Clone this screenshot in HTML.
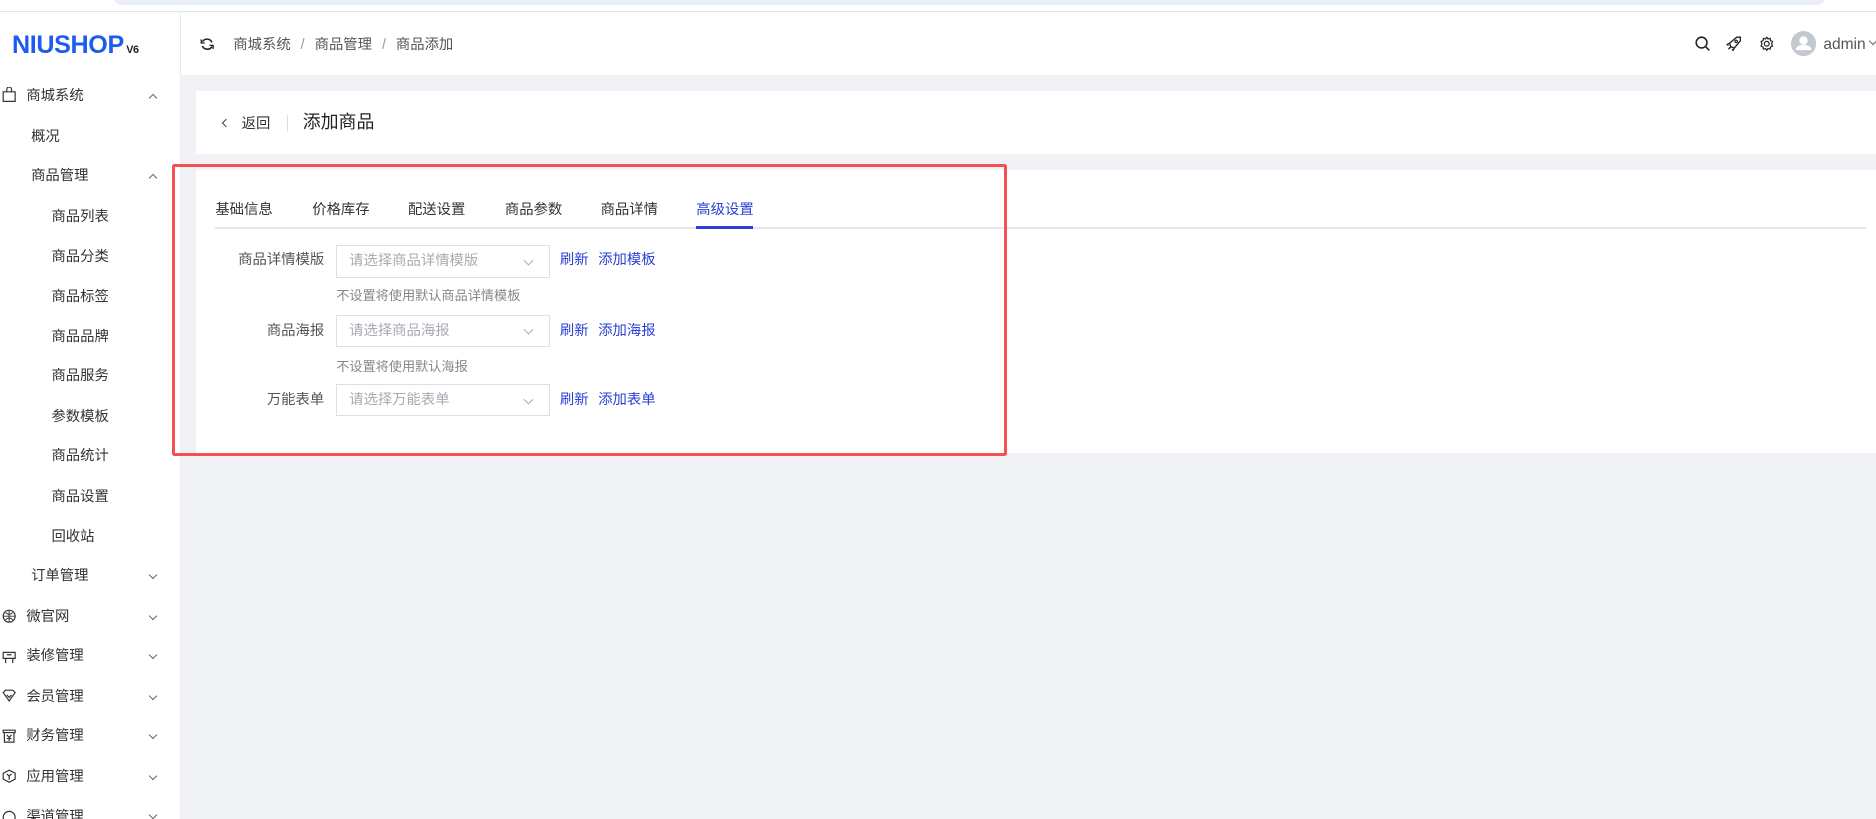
<!DOCTYPE html>
<html><head><meta charset="utf-8"><style>
*{margin:0;padding:0;box-sizing:border-box}
html,body{width:1876px;height:819px;overflow:hidden;background:#fff}
#w{zoom:1.1964;width:1568px;height:685px;position:relative;font-family:"Liberation Sans","Noto Sans CJK SC",sans-serif;font-size:12px;color:#333;overflow:hidden}
.a{position:absolute;white-space:nowrap;line-height:16px}
.side .a{font-size:12px;color:#333}
.chev{position:absolute;width:5px;height:5px;border-left:1px solid #666;border-top:1px solid #666}
.up{transform:rotate(45deg)}
.dn{transform:rotate(225deg)}
.sel{position:absolute;width:179px;height:27px;border:1px solid #dcdfe6;background:#fff;color:#a8abb2;padding-left:10px;line-height:26px}
.sel i{position:absolute;right:14px;top:9px;width:6px;height:6px;border-left:1px solid #aaa;border-bottom:1px solid #aaa;transform:rotate(-45deg)}
.lnk{color:#2b3fd6}
.lbl{position:absolute;width:120px;text-align:right;left:151px;color:#555;line-height:16px}
.hint{color:#888;font-size:11px}
</style></head><body><div id="w">
<div class="a" style="left:0;top:0;width:1568px;height:9px;background:#fff"></div>
<div class="a" style="left:95px;top:-8px;width:1430px;height:12px;background:#e8edf6;border-radius:8px"></div>
<div class="a" style="left:0;top:9px;width:1568px;height:1px;background:#e4e6ea"></div>
<div class="a side" style="left:0;top:10px;width:151px;height:675px;background:#fff;border-right:1px solid #eceef1">
<div class="a" style="left:10px;top:17px;font-size:21px;line-height:22px;font-weight:bold;color:#1e5cf0;letter-spacing:-0.3px">NIUSHOP<span style="font-size:9px;color:#222;margin-left:2px">V6</span></div>
</div>
<div class="side">
<svg class="a" style="left:2px;top:73px" width="12" height="13" viewBox="0 0 12 13"><path d="M1 4h10v8H1zM4 4V2a2 2 0 0 1 4 0v2" fill="none" stroke="#333"/></svg>
<div class="a" style="left:22px;top:73px">商城系统</div><div class="chev up" style="left:125px;top:79px"></div>
<div class="a" style="left:26px;top:107px">概况</div>
<div class="a" style="left:26px;top:140px">商品管理</div><div class="chev up" style="left:125px;top:146px"></div>
<div class="a" style="left:43px;top:174px">商品列表</div>
<div class="a" style="left:43px;top:207px">商品分类</div>
<div class="a" style="left:43px;top:241px">商品标签</div>
<div class="a" style="left:43px;top:274px">商品品牌</div>
<div class="a" style="left:43px;top:307px">商品服务</div>
<div class="a" style="left:43px;top:341px">参数模板</div>
<div class="a" style="left:43px;top:374px">商品统计</div>
<div class="a" style="left:43px;top:408px">商品设置</div>
<div class="a" style="left:43px;top:441px">回收站</div>
<div class="a" style="left:26px;top:474px">订单管理</div><div class="chev dn" style="left:125px;top:478px"></div>
<svg class="a" style="left:2px;top:509px" width="12" height="12" viewBox="0 0 12 12"><circle cx="6" cy="6" r="5" fill="none" stroke="#333"/><path d="M1 6h10M6 1v10M3 3c2 2 4 2 6 0M3 9c2-2 4-2 6 0" fill="none" stroke="#333" stroke-width=".8"/></svg>
<div class="a" style="left:22px;top:508px">微官网</div><div class="chev dn" style="left:125px;top:512px"></div>
<svg class="a" style="left:2px;top:543px" width="12" height="12" viewBox="0 0 12 12"><path d="M1 2h10v5H1zM3 7v4M9 7v4M4 4h4" fill="none" stroke="#333"/></svg>
<div class="a" style="left:22px;top:541px">装修管理</div><div class="chev dn" style="left:125px;top:545px"></div>
<svg class="a" style="left:2px;top:576px" width="12" height="12" viewBox="0 0 12 12"><path d="M1 3l2-2h6l2 2-5 7z M4 5l2 2 2-2" fill="none" stroke="#333"/></svg>
<div class="a" style="left:22px;top:575px">会员管理</div><div class="chev dn" style="left:125px;top:579px"></div>
<svg class="a" style="left:2px;top:609px" width="12" height="12" viewBox="0 0 12 12"><path d="M1 1h10v2H1zM2 3v8h8V3M4 5l2 2 2-2M6 7v3M4 8h4" fill="none" stroke="#333"/></svg>
<div class="a" style="left:22px;top:608px">财务管理</div><div class="chev dn" style="left:125px;top:612px"></div>
<svg class="a" style="left:2px;top:643px" width="12" height="12" viewBox="0 0 12 12"><path d="M6 1l5 2.5v5L6 11 1 8.5v-5zM4 4l2 2 2-2M6 6v3" fill="none" stroke="#333"/></svg>
<div class="a" style="left:22px;top:642px">应用管理</div><div class="chev dn" style="left:125px;top:646px"></div>
<svg class="a" style="left:2px;top:676px" width="12" height="12" viewBox="0 0 12 12"><circle cx="6" cy="7" r="5" fill="none" stroke="#333"/></svg>
<div class="a" style="left:22px;top:675px">渠道管理</div><div class="chev dn" style="left:125px;top:679px"></div>
</div>
<div class="a" style="left:151px;top:10px;width:1417px;height:53px;background:#fff;box-shadow:0 1px 3px rgba(0,0,0,.04)"></div>
<svg class="a" style="left:167px;top:31px" width="12" height="12" viewBox="0 0 12 12"><path d="M10 4.5A4.5 4.5 0 0 0 2 4M2 7.5A4.5 4.5 0 0 0 10 8" fill="none" stroke="#222" stroke-width="1.3"/><path d="M1 2v3h3M11 10V7H8" fill="none" stroke="#222" stroke-width="1.1"/></svg>
<div class="a" style="left:195px;top:30px;color:#555">商城系统 <span style="color:#999;margin:0 5px">/</span> 商品管理 <span style="color:#999;margin:0 5px">/</span> 商品添加</div>
<svg class="a" style="left:1417px;top:30px" width="13" height="13" viewBox="0 0 13 13"><circle cx="5.5" cy="5.5" r="4.5" fill="none" stroke="#222" stroke-width="1.3"/><path d="M9 9l3 3" stroke="#222" stroke-width="1.3"/></svg>
<svg class="a" style="left:1443px;top:30px" width="13" height="13" viewBox="0 0 13 13"><path d="M4 9l-1-3 6-5 3 0 0 3-5 6zM3 6L1 7l1 1M7 10l-1 2-1-1M2 11l2-2" fill="none" stroke="#222" stroke-width="1.1"/><circle cx="8.5" cy="4.5" r="1" fill="none" stroke="#222"/></svg>
<svg class="a" style="left:1470px;top:30px" width="13" height="13" viewBox="0 0 13 13"><circle cx="6.5" cy="6.5" r="2" fill="none" stroke="#222"/><path d="M6.5 1l1 1.5 1.8-.5.3 1.8 1.7.8-.8 1.9.8 1.9-1.7.8-.3 1.8-1.8-.5-1 1.5-1-1.5-1.8.5-.3-1.8-1.7-.8.8-1.9-.8-1.9 1.7-.8.3-1.8 1.8.5z" fill="none" stroke="#222"/></svg>
<svg class="a" style="left:1497px;top:26px" width="21" height="21" viewBox="0 0 21 21"><circle cx="10.5" cy="10.5" r="10.5" fill="#c4c8cf"/><circle cx="10.5" cy="8" r="3.5" fill="#fff"/><path d="M4 16c0-3 3-4.5 6.5-4.5S17 13 17 16z" fill="#fff"/></svg>
<div class="a" style="left:1524px;top:29px;font-size:13px;color:#555">admin</div>
<div class="chev dn" style="left:1563px;top:32px;border-color:#666"></div>
<div class="a" style="left:151px;top:63px;width:1417px;height:622px;background:#f0f2f5"></div>
<div class="a" style="left:164px;top:76px;width:1404px;height:53px;background:#fff"></div>
<div class="chev" style="left:186px;top:100px;transform:rotate(-45deg);border-color:#444"></div>
<div class="a" style="left:202px;top:96px;color:#333">返回</div>
<div class="a" style="left:240px;top:96px;width:1px;height:14px;background:#ddd"></div>
<div class="a" style="left:253px;top:94px;font-size:15px;line-height:18px;color:#222">添加商品</div>
<div class="a" style="left:164px;top:142px;width:1404px;height:237px;background:#fff"></div>
<div class="a" style="left:180px;top:190px;width:1380px;height:1px;background:#e4e7ed"></div>
<div class="a" style="left:180px;top:168px;color:#333">基础信息</div>
<div class="a" style="left:261px;top:168px;color:#333">价格库存</div>
<div class="a" style="left:341px;top:168px;color:#333">配送设置</div>
<div class="a" style="left:422px;top:168px;color:#333">商品参数</div>
<div class="a" style="left:502px;top:168px;color:#333">商品详情</div>
<div class="a" style="left:582px;top:168px;color:#2b3fd6">高级设置</div>
<div class="a" style="left:582px;top:189px;width:47px;height:2px;background:#2b3fd6"></div>
<div class="lbl" style="top:210px">商品详情模版</div>
<div class="sel" style="left:281px;top:205px">请选择商品详情模版<i></i></div>
<div class="a lnk" style="left:468px;top:210px">刷新</div><div class="a lnk" style="left:500px;top:210px">添加模板</div>
<div class="a hint" style="left:281px;top:239px">不设置将使用默认商品详情模板</div>
<div class="lbl" style="top:269px">商品海报</div>
<div class="sel" style="left:281px;top:263px">请选择商品海报<i></i></div>
<div class="a lnk" style="left:468px;top:269px">刷新</div><div class="a lnk" style="left:500px;top:269px">添加海报</div>
<div class="a hint" style="left:281px;top:298px">不设置将使用默认海报</div>
<div class="lbl" style="top:327px">万能表单</div>
<div class="sel" style="left:281px;top:321px">请选择万能表单<i></i></div>
<div class="a lnk" style="left:468px;top:327px">刷新</div><div class="a lnk" style="left:500px;top:327px">添加表单</div>
<div class="a" style="left:144px;top:137px;width:698px;height:244px;border:3px solid #f5504f;border-radius:2px"></div>
</div></body></html>
